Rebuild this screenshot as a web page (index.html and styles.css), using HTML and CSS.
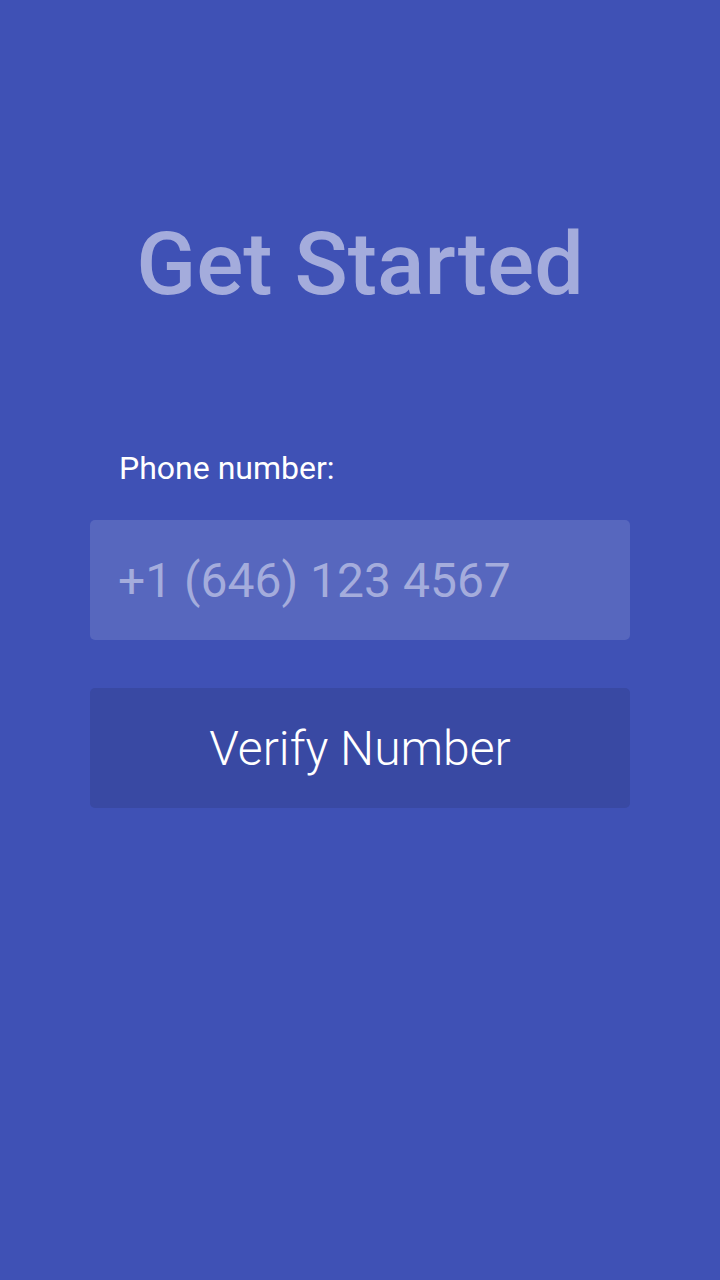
FILE: index.html
```html
<!DOCTYPE html>
<html lang="en">
<head>
  <meta charset="UTF-8">
  <meta name="viewport" content="width=device-width, initial-scale=1.0">
  <title>Get Started</title>
  <link rel="stylesheet" href="styles.css">
</head>
<body>
  <div class="screen">
    <h1 class="title">Get Started</h1>

    <form class="signup-form">
      <label class="phone-label" for="phone">Phone number:</label>
      <input class="phone-input" id="phone" type="tel" placeholder="+1 (646) 123 4567">
      <button class="verify-button" type="button">Verify Number</button>
    </form>
  </div>
</body>
</html>
```

FILE: styles.css
```css
html, body {
  margin: 0;
  padding: 0;
  height: 100%;
}

body {
  font-family: Roboto, "Noto Sans", sans-serif;
  background-color: #3f51b5;
  color: white;
}

.screen {
  display: flex;
  flex-direction: column;
  align-items: center;
  padding-top: 212px;
}

.title {
  margin: 0;
  font-size: 88px;
  font-weight: 500;
  line-height: 104px;
  color: #a4acdc;
}

.signup-form {
  width: 540px;
  margin-top: 132px;
  display: flex;
  flex-direction: column;
}

.phone-label {
  font-size: 32px;
  font-weight: 400;
  line-height: 40px;
  padding-left: 29px;
  margin-bottom: 32px;
}

.phone-input {
  box-sizing: border-box;
  height: 120px;
  padding: 0 28px;
  border: none;
  border-radius: 5px;
  background-color: #5767be;
  color: white;
  font-family: inherit;
  font-size: 48px;
  outline: none;
}

.phone-input::placeholder {
  color: #a4acdc;
}

.verify-button {
  height: 120px;
  margin-top: 48px;
  border: none;
  border-radius: 5px;
  background-color: #3949a3;
  color: white;
  font-family: inherit;
  font-size: 48px;
  font-weight: 300;
  cursor: pointer;
}
```
